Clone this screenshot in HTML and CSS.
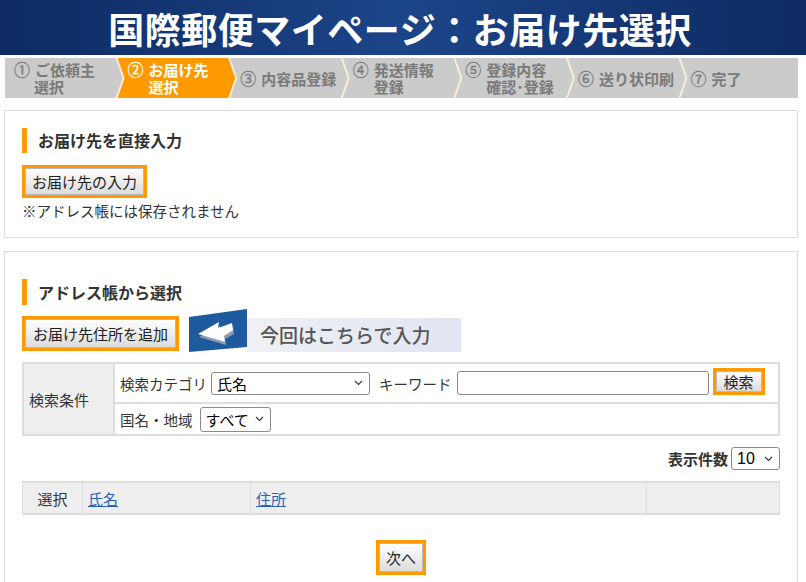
FILE: index.html
```html
<!DOCTYPE html>
<html lang="ja">
<head>
<meta charset="utf-8">
<title>国際郵便マイページ：お届け先選択</title>
<link rel="stylesheet" href="styles.css">
</head>
<body>
<header class="title"><h1>国際郵便マイページ：お届け先選択</h1></header>
<ol class="steps">
  <li class="step first"><div class="st"><span class="n">①</span>ご依頼主<br>選択</div></li>
  <li class="step active"><div class="st"><span class="n">②</span>お届け先<br>選択</div></li>
  <li class="step"><div class="st"><span class="n">③</span>内容品登録</div></li>
  <li class="step"><div class="st"><span class="n">④</span>発送情報<br>登録</div></li>
  <li class="step"><div class="st"><span class="n">⑤</span>登録内容<br>確認･登録</div></li>
  <li class="step"><div class="st"><span class="n">⑥</span>送り状印刷</div></li>
  <li class="step last"><div class="st"><span class="n">⑦</span>完了</div></li>
</ol>
<main class="content">
  <section class="panel panel-direct">
    <h2 class="sec-title">お届け先を直接入力</h2>
    <div class="btn-row"><span class="btnbox"><button class="btn b-direct">お届け先の入力</button></span></div>
    <p class="note">※アドレス帳には保存されません</p>
  </section>
  <section class="panel panel-book">
    <h2 class="sec-title">アドレス帳から選択</h2>
    <div class="add-row">
      <span class="btnbox"><button class="btn b-add">お届け先住所を追加</button></span>
      <div class="hint">
        <svg class="hint-icon" width="58" height="43" viewBox="0 0 58 43">
          <polygon points="0,8 58,0 58,38 0,43" fill="#1d5a9e"/>
          <polygon points="10,28 31,17 30,23 44,18 45,25 36,30 37,36" fill="#8e9bb0"/>
          <polygon points="9,25 30,13 29,19 43,14 44,21 35,27 36,33" fill="#ffffff"/>
        </svg>
        <span class="hint-band">今回はこちらで入力</span>
      </div>
    </div>
    <table class="search">
      <tr>
        <th rowspan="2" class="s-label">検索条件</th>
        <td class="r1">
          <div class="frow">
            <span class="lbl">検索カテゴリ</span>
            <span class="selwrap sw-cat"><select class="sel sel-cat"><option>氏名</option></select><svg class="chev" width="9" height="6" viewBox="0 0 9 6"><polyline points="1,1 4.5,4.5 8,1" fill="none" stroke="#333" stroke-width="1.1"/></svg></span>
            <span class="lbl kw">キーワード</span>
            <input class="kw-input" type="text">
            <span class="btnbox sm"><button class="btn b-search">検索</button></span>
          </div>
        </td>
      </tr>
      <tr>
        <td class="r2">
          <div class="frow">
            <span class="lbl">国名・地域</span>
            <span class="selwrap sw-country"><select class="sel sel-country"><option>すべて</option></select><svg class="chev" width="9" height="6" viewBox="0 0 9 6"><polyline points="1,1 4.5,4.5 8,1" fill="none" stroke="#333" stroke-width="1.1"/></svg></span>
          </div>
        </td>
      </tr>
    </table>
    <div class="perpage"><span class="pp-label">表示件数</span><span class="selwrap"><select class="sel sel-pp"><option>10</option></select><svg class="chev" width="9" height="6" viewBox="0 0 9 6"><polyline points="1,1 4.5,4.5 8,1" fill="none" stroke="#333" stroke-width="1.1"/></svg></span></div>
    <table class="results">
      <tr>
        <th class="c1">選択</th>
        <th class="c2"><a href="#">氏名</a></th>
        <th class="c3"><a href="#">住所</a></th>
        <th class="c4"></th>
      </tr>
    </table>
    <div class="next"><span class="btnbox nb"><button class="btn b-next">次へ</button></span></div>
  </section>
</main>
</body>
</html>
```
FILE: styles.css
```css
* { box-sizing: border-box; margin: 0; padding: 0; }
html, body { background: #fff; }
body {
  margin: 0;
  width: 806px;
  font-family: "Noto Sans CJK JP", "Liberation Sans", sans-serif;
  color: #333;
  overflow: hidden;
}
.title {
  height: 55px;
  background: linear-gradient(90deg, #0d2a62 0%, #1c4589 50%, #0d2a62 100%);
  display: flex;
  align-items: center;
  justify-content: center;
}
.title h1 {
  color: #fff;
  font-size: 36px;
  font-weight: 700;
  line-height: 1;
  letter-spacing: 0.5px;
  margin-right: 6px;
}
.steps {
  list-style: none;
  display: flex;
  margin: 3px 8px 0 5px;
  height: 40px;
  background: #fbeedc;
}
.step {
  flex: 1;
  background: #cbcbcb;
  color: #7a7a7a;
  font-weight: 700;
  font-size: 15px;
  line-height: 17px;
  display: flex;
  align-items: center;
  margin-right: -5px;
  clip-path: polygon(0 0, calc(100% - 7px) 0, 100% 50%, calc(100% - 7px) 100%, 0 100%, 7px 50%);
}
.step.first {
  clip-path: polygon(0 0, calc(100% - 7px) 0, 100% 50%, calc(100% - 7px) 100%, 0 100%);
}
.step.last {
  margin-right: 0;
  clip-path: polygon(0 0, 100% 0, 100% 100%, 0 100%, 7px 50%);
}
.step.active { background: #ff9900; color: #fff; }
.st { padding-left: 31px; text-indent: -21px; white-space: nowrap; }
.step.first .st { padding-left: 29px; text-indent: -20px; }
.n {
  display: inline-block;
  text-indent: 0;
  width: 21px;
  font-size: 16px;
  line-height: 17px;
  vertical-align: top;
  font-family: "Noto Sans CJK JP", sans-serif;
  font-weight: 400;
  -webkit-text-stroke: 0.3px currentColor;
}

.content { padding: 12px 8px 0 4px; }
.panel { border: 1px solid #dddddd; padding: 17px 17px 16px; }
.panel + .panel { margin-top: 13px; }
.panel-book { padding-top: 27px; padding-bottom: 40px; }
.sec-title {
  font-size: 16px;
  font-weight: 700;
  color: #333;
  border-left: 5px solid #ff9900;
  padding-left: 11px;
  height: 25px;
  line-height: 25px;
}
.panel-book .sec-title { height: 26px; line-height: 26px; }
.btn-row { margin-top: 12px; display: flex; }
.btnbox { display: inline-flex; border: 3px solid #ff9900; background: #ff9900; }
.btn {
  font-family: "Noto Sans CJK JP", "Liberation Sans", sans-serif;
  font-size: 15px;
  color: #222;
  background: linear-gradient(#fefefe, #dcdcdc);
  border: 1px solid #b8b8b8;
  padding: 0 6px;
  height: 27px;
  line-height: 25px;
}
.b-add { height: 29px; padding: 0 7px; }
.note { font-size: 14.5px; color: #333; line-height: 20px; margin-top: 3px; }

.add-row { display: flex; align-items: flex-end; margin-top: 4px; }
.add-row .btnbox { margin-bottom: 1px; }
.hint { display: flex; align-items: flex-end; margin-left: 10px; }
.hint-icon { display: block; }
.hint-band {
  width: 214px;
  height: 34px;
  background: linear-gradient(90deg, #eef0f5 0%, #e2e5f1 100%);
  font-size: 19px;
  font-weight: 500;
  color: #555;
  padding-left: 13px;
  line-height: 34px;
}

.search {
  margin-top: 10px;
  width: 758px;
  border-collapse: collapse;
  border: 2px solid #dddddd;
}
.search th, .search td { border: 2px solid #dddddd; }
.s-label {
  width: 91px;
  background: #eeeeee;
  font-weight: 400;
  font-size: 15px;
  text-align: left;
  padding-left: 5px;
  color: #333;
}
.r1 { height: 40px; padding-left: 5px; }
.r2 { height: 32px; padding-left: 5px; }
.frow { display: flex; align-items: center; }
.lbl { font-size: 14.5px; color: #333; }
.selwrap { position: relative; display: inline-flex; }
.chev { position: absolute; right: 7px; top: 50%; margin-top: -3px; pointer-events: none; }
.sel {
  -webkit-appearance: none;
  appearance: none;
  font-family: "Noto Sans CJK JP", "Liberation Sans", sans-serif;
  font-size: 15px;
  color: #000;
  background: #fff;
  border: 1px solid #8a8a8a;
  border-radius: 3px;
  height: 23px;
  padding: 0 20px 0 5px;
  line-height: 21px;
}
.sw-cat { margin-left: 4px; }
.sel-cat { width: 159px; }
.kw { margin-left: 9px; }
.kw-input {
  width: 252px;
  height: 24px;
  margin-left: 5px;
  border: 1px solid #8a8a8a;
  border-radius: 3px;
  font-size: 15px;
}
.btnbox.sm { margin-left: 4px; margin-top: -4px; }
.b-search { height: 21px; line-height: 19px; padding: 0 7px; }
.sw-country { margin-left: 7px; }
.sel-country { width: 71px; height: 25px; line-height: 23px; }

.perpage {
  margin-top: 11px;
  width: 758px;
  display: flex;
  justify-content: flex-end;
  align-items: center;
}
.pp-label { font-size: 15px; font-weight: 700; color: #333; margin-right: 3px; }
.sel-pp { width: 49px; height: 23px; font-family: "Liberation Sans", sans-serif; font-size: 16px; }

.results {
  margin-top: 11px;
  width: 758px;
  border-collapse: collapse;
}
.results th {
  height: 32px;
  background: #eeeeee;
  border: 1px solid #dddddd;
  border-top: 2px solid #dddddd;
  border-bottom: 2px solid #dddddd;
  font-weight: 400;
  font-size: 15px;
  text-align: left;
  padding-left: 5px;
  color: #333;
}
.results .c1 { width: 60px; text-align: center; padding-left: 0; }
.results .c2 { width: 168px; }
.results .c3 { width: 396px; }
.results a { color: #2c5fb3; text-decoration: underline; }

.next { display: flex; justify-content: center; margin-top: 25px; }
.b-next { height: 29px; padding: 0 6px; }
```
